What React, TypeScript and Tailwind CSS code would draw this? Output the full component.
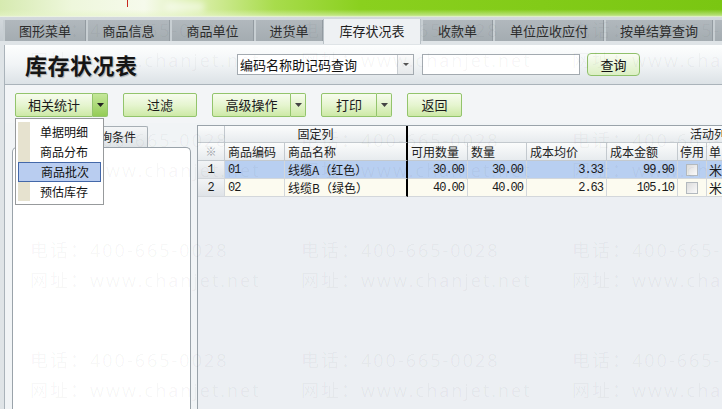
import React from 'react';

const cn = "font-['Noto_Sans_CJK_SC',sans-serif]";
const mono = "font-['Liberation_Mono','Noto_Sans_CJK_SC',monospace]";

const tabs = [
  { label: '图形菜单', w: 83 },
  { label: '商品信息', w: 84 },
  { label: '商品单位', w: 84 },
  { label: '进货单', w: 69 },
  { label: '库存状况表', w: 98, active: true },
  { label: '收款单', w: 72 },
  { label: '单位应收应付', w: 111 },
  { label: '按单结算查询', w: 109 },
  { label: '', w: 40 },
];

const menuItems = ['单据明细', '商品分布', '商品批次', '预估库存'];

interface Row {
  no: string;
  code: string;
  name: string;
  avail: string;
  qty: string;
  avg: string;
  amount: string;
  unit: string;
}

const rows: Row[] = [
  { no: '1', code: '01', name: '线缆A（红色）', avail: '30.00', qty: '30.00', avg: '3.33', amount: '99.90', unit: '米' },
  { no: '2', code: '02', name: '线缆B（绿色）', avail: '40.00', qty: '40.00', avg: '2.63', amount: '105.10', unit: '米' },
];

// repeated light stamp over the whole page
const stampTops = [15, 125, 235, 345];
const stampLefts = [30, 301, 572];

const btn =
  'h-[24px] flex items-center justify-center text-[13px] text-[#1a1a1a] border border-[#93c46c] bg-gradient-to-b from-[#f7fcee] via-[#e6f5d0] to-[#cde9a6]';

function Arrow({ dark }: { dark?: boolean }) {
  return (
    <svg width="7" height="4" viewBox="0 0 7 4">
      <path d="M0 0h7L3.5 4z" fill={dark ? '#222' : '#444'} />
    </svg>
  );
}

function SplitButton({ label, w, pressed }: { label: string; w: number; pressed?: boolean }) {
  return (
    <div className="flex">
      <div className={`${btn} rounded-l-[2px]`} style={{ width: w }}>
        {label}
      </div>
      <div
        className={`h-[24px] w-[15px] flex items-center justify-center border border-l-0 border-[#93c46c] rounded-r-[2px] ${
          pressed
            ? 'bg-gradient-to-b from-[#c5e79a] to-[#94cc55]'
            : 'bg-gradient-to-b from-[#f7fcee] to-[#cde9a6]'
        }`}
      >
        <Arrow dark={pressed} />
      </div>
    </div>
  );
}

function Check() {
  return (
    <div className="w-[12px] h-[12px] border border-[#b3b9be] bg-gradient-to-br from-[#dcdcdc] to-[#fafafa]" />
  );
}

const hdr = 'shrink-0 bg-gradient-to-b from-[#fbfcfc] to-[#e7ebee] border-r border-b border-[#c3c9ce]';
const cell = 'shrink-0 border-r border-b border-[#d3d7db] flex items-center h-[18px]';

export default function App() {
  return (
    <div className={`relative w-[722px] h-[409px] overflow-hidden bg-[#d5dadf] ${cn}`}>
      {/* banner */}
      <div className="relative h-[17px] bg-[linear-gradient(to_right,#d6eab0_0%,#eef7dc_10%,#f6faec_20%,#d3ec9c_29%,#a8dc4c_38%,#8ad01e_50%,#7ac612_100%)]">
        <div className="absolute inset-0 bg-[linear-gradient(to_bottom,rgba(255,255,255,0)_55%,rgba(230,245,200,0.55)_90%,#eef3e6_100%)]" />
        <div className="absolute left-[127px] top-0 w-px h-[7px] bg-[#c8281e]" />
        <div className="absolute left-[165px] top-[2px] w-[40px] h-[10px] rounded-full bg-white/50 blur-[3px]" />
      </div>

      {/* tab strip */}
      <div className="h-[24px] flex pt-[3px] pl-[3px] bg-gradient-to-b from-[#d3d9dd] to-[#c3cacf]">
        {tabs.map((t, i) =>
          t.active ? (
            <div
              key={i}
              className="relative z-10 -mt-[1px] h-[25px] shrink-0 flex items-start justify-center pt-[2px] text-[13px] text-[#1e1e1e] bg-[#eef1f3] border-x border-[#b9c1c6]"
              style={{ width: t.w }}
            >
              {t.label}
            </div>
          ) : (
            <div
              key={i}
              className="h-[21px] shrink-0 flex items-center justify-center text-[13px] text-[#2c2c2c] bg-gradient-to-b from-[#b1b8bd] to-[#a4acb1] border-l-2 border-l-[#c7ced2] border-r border-r-[#939ba1]"
              style={{ width: t.w }}
            >
              {t.label}
            </div>
          )
        )}
      </div>

      <div className="pl-[4px] pt-[4px] bg-[#dfe4e7] h-[368px] flex flex-col">
        {/* title bar */}
        <div className="h-[40px] shrink-0 flex items-center border-l border-b border-[#aab3ba] bg-gradient-to-b from-[#fdfefe] via-[#f1f4f6] to-[#dce2e6]">
          <div className="w-[232px] pl-[20px] text-[22px] font-bold text-[#151515] tracking-[0.5px] [text-shadow:1px_1px_1px_rgba(0,0,0,0.25)]">
            库存状况表
          </div>
          <div className="w-[177px] h-[21px] flex bg-white border border-[#a3aab0]">
            <div className="flex-1 flex items-center pl-[2px] text-[13px] text-[#111]">编码名称助记码查询</div>
            <div className="w-[16px] flex items-center justify-center border-l border-[#c9ced2] bg-gradient-to-b from-[#fbfbfb] to-[#e6e9eb]">
              <svg width="6" height="3" viewBox="0 0 6 3">
                <path d="M0 0h6L3 3z" fill="#555" />
              </svg>
            </div>
          </div>
          <div className="ml-[8px] w-[158px] h-[21px] bg-white border border-[#a3aab0]" />
          <div className="ml-[7px] w-[53px] h-[23px] flex items-center justify-center rounded-[4px] border border-[#90c16b] text-[13px] text-[#111] bg-gradient-to-b from-[#fafdf4] to-[#dcefc4]">
            查询
          </div>
        </div>

        {/* toolbar */}
        <div className="h-[38px] shrink-0 flex items-start pt-[8px] pl-[10px] gap-[15px] border-l border-[#aab3ba] bg-[#f3f5f7]">
          <SplitButton label="相关统计" w={78} pressed />
          <div className={`${btn} w-[74px] rounded-[2px]`}>过滤</div>
          <SplitButton label="高级操作" w={79} />
          <SplitButton label="打印" w={56} />
          <div className={`${btn} w-[55px] rounded-[2px]`}>返回</div>
        </div>

        {/* body */}
        <div className="flex-1 flex border-l border-[#aab3ba] bg-[#f1f4f6]">
          {/* query side panel */}
          <div className="w-[192px] shrink-0 flex flex-col pl-[7px] pr-[6px] pt-[3px]">
            <div className="h-[21px] flex pl-[64px]">
              <div className="w-[72px] flex items-center justify-center text-[12px] text-[#222] bg-gradient-to-b from-[#f4f6f7] to-[#dfe4e7] border border-b-0 border-[#a7afb5] rounded-t-[2px]">
                查询条件
              </div>
            </div>
            <div className="flex-1 bg-white border border-b-0 border-[#9aa3aa] rounded-t-[5px]" />
          </div>

          {/* data grid */}
          <div className="flex-1 min-w-0 pt-[2px] overflow-hidden">
            <div className="h-full border-l border-t border-[#9aa3aa] bg-[#eceff3] overflow-hidden">
              <div className="flex h-[17px] text-[12px] text-[#222]">
                <div className={`${hdr} w-[27px]`} />
                <div className={`${hdr} w-[183px] !border-r-2 !border-r-black flex items-center justify-center`}>固定列</div>
                <div className={`${hdr} w-[320px] flex items-center pl-[282px] whitespace-nowrap`}>活动列</div>
              </div>
              <div className="flex h-[18px] text-[12px] text-[#222]">
                <div className={`${hdr} w-[27px] flex items-center justify-center text-[11px] text-[#9aa0a6]`}>※</div>
                <div className={`${hdr} w-[60px] flex items-center pl-[3px]`}>商品编码</div>
                <div className={`${hdr} w-[123px] !border-r-2 !border-r-black flex items-center pl-[3px]`}>商品名称</div>
                <div className={`${hdr} w-[60px] flex items-center pl-[3px]`}>可用数量</div>
                <div className={`${hdr} w-[59px] flex items-center pl-[3px]`}>数量</div>
                <div className={`${hdr} w-[80px] flex items-center pl-[3px]`}>成本均价</div>
                <div className={`${hdr} w-[71px] flex items-center pl-[3px]`}>成本金额</div>
                <div className={`${hdr} w-[29px] flex items-center justify-center`}>停用</div>
                <div className={`${hdr} w-[40px] flex items-center pl-[2px]`}>单</div>
              </div>
              {rows.map((r, i) => {
                const bg = i === 0 ? 'bg-[#b8cff1]' : 'bg-[#fcfbf0]';
                return (
                  <div key={r.no} className="flex text-[12px] text-[#1a1a1a]">
                    <div className={`${cell} w-[27px] justify-center bg-gradient-to-b from-[#f2f4f6] to-[#dfe3e7] border-[#c3c9ce] ${mono}`}>
                      {r.no}
                    </div>
                    <div className={`${cell} ${bg} w-[60px] pl-[3px] ${mono} tracking-[-1px]`}>{r.code}</div>
                    <div className={`${cell} ${bg} w-[123px] pl-[3px] !border-r-2 !border-r-black`}>{r.name}</div>
                    <div className={`${cell} ${bg} w-[60px] justify-end pr-[3px] ${mono} tracking-[-1px]`}>{r.avail}</div>
                    <div className={`${cell} ${bg} w-[59px] justify-end pr-[3px] ${mono} tracking-[-1px]`}>{r.qty}</div>
                    <div className={`${cell} ${bg} w-[80px] justify-end pr-[3px] ${mono} tracking-[-1px]`}>{r.avg}</div>
                    <div className={`${cell} ${bg} w-[71px] justify-end pr-[3px] ${mono} tracking-[-1px]`}>{r.amount}</div>
                    <div className={`${cell} ${bg} w-[29px] justify-center`}>
                      <Check />
                    </div>
                    <div className={`${cell} ${bg} w-[40px] pl-[2px] text-[13px]`}>{r.unit}</div>
                  </div>
                );
              })}
            </div>
          </div>
        </div>
      </div>

      {/* stamp overlay */}
      <div className="absolute inset-0 pointer-events-none font-['Open_Sans','Noto_Sans_CJK_SC',sans-serif] text-[18px] leading-[30px] tracking-[2px] text-black/[0.045]">
        {stampTops.map((top) =>
          stampLefts.map((left) => (
            <div key={`${top}-${left}`} className="absolute whitespace-nowrap" style={{ top, left }}>
              <div>电话：400-665-0028</div>
              <div>网址：www.chanjet.net</div>
            </div>
          ))
        )}
      </div>

      {/* 相关统计 drop menu */}
      <div className="absolute left-[15px] top-[118px] w-[89px] h-[87px] bg-white border border-[#979a9c] pt-[3px] pl-[2px] pr-[2px]">
        <div className="absolute left-[2px] top-[3px] bottom-[3px] w-[12px] bg-[#e6e2cf]" />
        {menuItems.map((m, i) => (
          <div
            key={m}
            className={`relative h-[20px] flex items-center pl-[22px] text-[12px] text-[#111] ${
              i === 2 ? 'bg-[#b9cdf0] border border-[#4468a9] pl-[21px]' : ''
            }`}
          >
            {m}
          </div>
        ))}
      </div>
    </div>
  );
}
